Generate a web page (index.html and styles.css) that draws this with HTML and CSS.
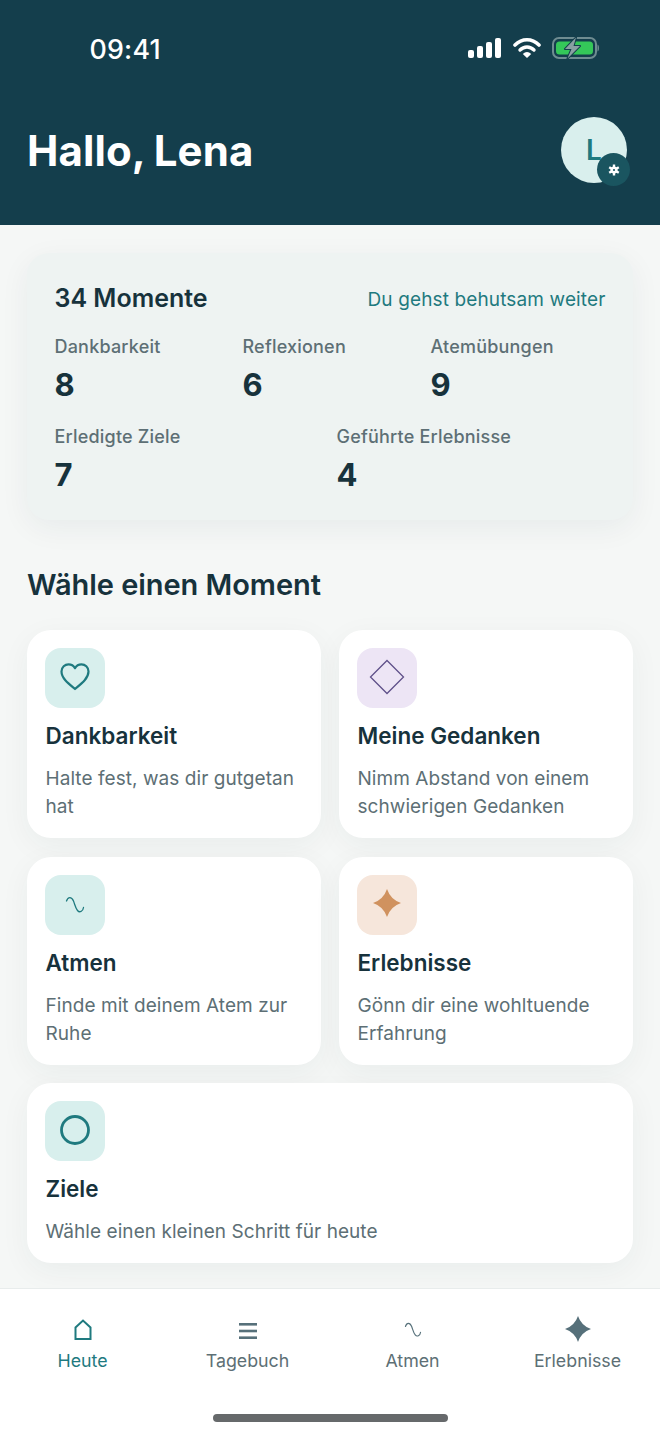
FILE: index.html
```html
<!DOCTYPE html>
<html lang="de">
<head>
<meta charset="utf-8">
<title>Hallo, Lena</title>
<link rel="stylesheet" href="styles.css">
</head>
<body>
<div class="screen">
  <header class="header">
    <div class="status">
      <span class="time">09:41</span>
      <div class="status-icons">
        <svg class="sig" width="33" height="20" viewBox="0 0 33 20"><rect x="0" y="12" width="6" height="8" rx="2" fill="#fff"/><rect x="9" y="8" width="6" height="12" rx="2" fill="#fff"/><rect x="18" y="4" width="6" height="16" rx="2" fill="#fff"/><rect x="27" y="0" width="6" height="20" rx="2" fill="#fff"/></svg>
        <svg class="wifi" width="28" height="21" viewBox="0 0 28 21"><path d="M2 8 C9 1 19 1 26 8" fill="none" stroke="#fff" stroke-width="3.600" stroke-linecap="round"/><path d="M7 13 C11 9 17 9 21 13" fill="none" stroke="#fff" stroke-width="3.400" stroke-linecap="round"/><path d="M9.800 17 C12.500 14.300 15.500 14.300 18.200 17 L14 21 Z" fill="#fff"/></svg>
        <svg class="batt" width="47" height="23" viewBox="0 0 47 23"><rect x="1" y="1" width="43" height="20" rx="6" fill="none" stroke="#6f8c91" stroke-width="2"/><rect x="4" y="4.500" width="37" height="13" rx="3.500" fill="#34c759"/><path d="M45.500 7.500 C47.500 8 47.500 14 45.500 14.500 Z" fill="#6f8c91"/><path d="M24 0.500 L13 12 H19.500 L15.500 21.500 L28 9 H21.500 Z" fill="#8a9fa3" stroke="#143e4c" stroke-width="2" stroke-linejoin="round" paint-order="stroke"/></svg>
      </div>
    </div>
    <div class="greeting">
      <h1 class="hello">Hallo, Lena</h1>
      <div class="avatar">
        <span class="avatar-letter">L</span>
        <span class="gear">
          <svg width="12" height="12" viewBox="0 0 12 12"><g stroke="#fff" stroke-width="2.400"><path d="M6 .5V11.500"/><path d="M1.200 3.200L10.800 8.800"/><path d="M1.200 8.800L10.800 3.200"/></g><circle cx="6" cy="6" r="3.600" fill="#fff"/><circle cx="6" cy="6" r="1.100" fill="#1a5560"/></svg>
        </span>
      </div>
    </div>
  </header>

  <main class="content">
    <section class="summary">
      <div class="summary-top">
        <h2 class="summary-title">34 Momente</h2>
        <span class="summary-note">Du gehst behutsam weiter</span>
      </div>
      <div class="stats stats-three">
        <div class="stat"><span class="stat-label">Dankbarkeit</span><span class="stat-value">8</span></div>
        <div class="stat"><span class="stat-label">Reflexionen</span><span class="stat-value">6</span></div>
        <div class="stat"><span class="stat-label">Atemübungen</span><span class="stat-value">9</span></div>
      </div>
      <div class="stats stats-two">
        <div class="stat"><span class="stat-label">Erledigte Ziele</span><span class="stat-value">7</span></div>
        <div class="stat"><span class="stat-label">Geführte Erlebnisse</span><span class="stat-value">4</span></div>
      </div>
    </section>

    <h2 class="section-title">Wähle einen Moment</h2>

    <div class="cards">
      <article class="card">
        <div class="tile tile-teal">
          <svg class="lift" width="32" height="32" viewBox="0 0 32 32"><path d="M16 28 C10 23 2.500 17.500 2.500 10.500 C2.500 6 6 3.300 9.500 3.300 C12.300 3.300 14.700 4.800 16 7.200 C17.300 4.800 19.700 3.300 22.500 3.300 C26 3.300 29.500 6 29.500 10.500 C29.500 17.500 22 23 16 28 Z" fill="none" stroke="#1f7a7f" stroke-width="2.200" stroke-linejoin="round"/></svg>
        </div>
        <h3 class="card-title">Dankbarkeit</h3>
        <p class="card-text">Halte fest, was dir gutgetan hat</p>
      </article>
      <article class="card">
        <div class="tile tile-lilac">
          <svg class="lift" width="36" height="36" viewBox="0 0 36 36"><path d="M18 1.500 L34.500 18 L18 34.500 L1.500 18 Z" fill="none" stroke="#5f5089" stroke-width="1.300"/></svg>
        </div>
        <h3 class="card-title">Meine Gedanken</h3>
        <p class="card-text">Nimm Abstand von einem schwierigen Gedanken</p>
      </article>
      <article class="card">
        <div class="tile tile-teal">
          <svg width="20" height="18" viewBox="0 0 20 18"><path d="M1.500 5 C3 .5 6.500 .5 8.500 5 C10 9 10.500 12 12.500 14.500 C14.500 17 18 15.500 18.500 11.500" fill="none" stroke="#1f7a7f" stroke-width="1.300" stroke-linecap="round"/></svg>
        </div>
        <h3 class="card-title">Atmen</h3>
        <p class="card-text">Finde mit deinem Atem zur Ruhe</p>
      </article>
      <article class="card">
        <div class="tile tile-peach">
          <svg class="lift-more" width="28" height="28" viewBox="0 0 28 28"><path d="M14 0 Q17.500 10.500 28 14 Q17.500 17.500 14 28 Q10.500 17.500 0 14 Q10.500 10.500 14 0 Z" fill="#d0925f"/></svg>
        </div>
        <h3 class="card-title">Erlebnisse</h3>
        <p class="card-text">Gönn dir eine wohltuende Erfahrung</p>
      </article>
      <article class="card card-wide">
        <div class="tile tile-teal">
          <svg class="lift" width="30" height="30" viewBox="0 0 30 30"><circle cx="15" cy="15" r="13.500" fill="none" stroke="#1f7a7f" stroke-width="2.800"/></svg>
        </div>
        <h3 class="card-title">Ziele</h3>
        <p class="card-text">Wähle einen kleinen Schritt für heute</p>
      </article>
    </div>
  </main>

  <nav class="tabbar">
    <div class="tabs">
      <div class="tab tab-active">
        <span class="tab-icon"><svg class="tab-home" width="18" height="22" viewBox="0 0 18 22"><path d="M1.500 20 V8.500 L9 1.500 L16.500 8.500 V20 Z" fill="none" stroke="#1f7a7f" stroke-width="2"/></svg></span>
        <span class="tab-label">Heute</span>
      </div>
      <div class="tab">
        <span class="tab-icon"><svg width="18" height="18" viewBox="0 0 18 18"><g fill="#56707a"><rect x="0" y="1" width="18" height="2.600"/><rect x="0" y="7.700" width="18" height="2.600"/><rect x="0" y="14.400" width="18" height="2.600"/></g></svg></span>
        <span class="tab-label">Tagebuch</span>
      </div>
      <div class="tab">
        <span class="tab-icon"><svg class="tab-wave" width="18" height="16" viewBox="0 0 20 18"><path d="M1.500 5 C3 .5 6.500 .5 8.500 5 C10 9 10.500 12 12.500 14.500 C14.500 17 18 15.500 18.500 11.500" fill="none" stroke="#56707a" stroke-width="1.300" stroke-linecap="round"/></svg></span>
        <span class="tab-label">Atmen</span>
      </div>
      <div class="tab">
        <span class="tab-icon"><svg class="tab-star" width="26" height="26" viewBox="0 0 28 28"><path d="M14 0 Q17.500 10.500 28 14 Q17.500 17.500 14 28 Q10.500 17.500 0 14 Q10.500 10.500 14 0 Z" fill="#56707a"/></svg></span>
        <span class="tab-label">Erlebnisse</span>
      </div>
    </div>
    <div class="home-indicator"></div>
  </nav>
</div>
</body>
</html>
```
FILE: styles.css
```css
* { box-sizing: border-box; margin: 0; padding: 0; }
html, body { width: 660px; height: 1434px; overflow: hidden; }
body { font-family: Inter, "Liberation Sans", sans-serif; background: #f5f7f6; color: #17323c; }
.screen { width: 660px; height: 1434px; display: flex; flex-direction: column; }

.header { height: 225px; background: #143e4c; color: #fff; padding: 0 27px; flex: none; }
.status { height: 98px; display: flex; justify-content: space-between; align-items: flex-start; padding-top: 32px; }
.time { margin-left: 62.500px; font-size: 26.800px; line-height: 34px; font-weight: 500; letter-spacing: 0.2px; }
.status-icons { display: flex; align-items: flex-start; margin-right: 34px; padding-top: 5px; }
.sig { margin-top: 1px; }
.wifi { margin-left: 12px; }
.batt { margin-left: 11px; }

.greeting { display: flex; justify-content: space-between; align-items: flex-start; padding-top: 19px; }
.hello { font-size: 42px; line-height: 68px; font-weight: 700; word-spacing: -1px; letter-spacing: 0.1px; }
.avatar { position: relative; width: 66px; height: 66px; border-radius: 50%; background: #d9efed; display: flex; align-items: center; justify-content: center; margin-right: 6px; }
.avatar-letter { font-size: 28px; font-weight: 600; color: #1f7a7f; }
.gear { position: absolute; right: -3px; bottom: -3px; width: 33px; height: 33px; border-radius: 50%; background: #1a5560; display: flex; align-items: center; justify-content: center; }

.content { flex: 1; padding: 28px 27px 0; }
.summary { height: 267px; background: #eef3f2; border-radius: 22px; padding: 28px 27.500px 0; box-shadow: 0 8px 30px rgba(23, 50, 60, 0.06); }
.summary-top { display: flex; justify-content: space-between; align-items: center; height: 34px; }
.summary-title { font-size: 25px; line-height: 34px; font-weight: 600; color: #17323c; }
.summary-note { font-size: 19px; line-height: 24px; letter-spacing: 0.13px; color: #1f7a7f; margin-top: 4px; }
.stats { display: grid; margin-top: 20px; }
.stats-three { grid-template-columns: repeat(3, 188px); }
.stats-two { grid-template-columns: repeat(2, 282px); margin-top: 20px; }
.stat { display: flex; flex-direction: column; }
.stat-label { font-size: 18px; line-height: 24px; letter-spacing: 0.2px; font-weight: 500; color: #5d6f75; }
.stat-value { font-size: 31px; line-height: 40px; font-weight: 700; color: #17323c; margin-top: 6px; }

.section-title { font-size: 29px; line-height: 38px; font-weight: 600; letter-spacing: -0.05px; color: #17323c; margin-top: 46px; }

.cards { display: grid; grid-template-columns: 294px 294px; grid-template-rows: 208px 208px 180px; gap: 18.500px 18px; margin-top: 26px; }
.card { background: #fff; border-radius: 24px; padding: 18px 18.500px; box-shadow: 0 8px 30px rgba(23, 50, 60, 0.05); }
.card-wide { grid-column: 1 / 3; }
.tile { width: 60px; height: 60px; border-radius: 16px; display: flex; align-items: center; justify-content: center; margin-left: -0.500px; }
.tile-teal { background: #d8efed; }
.tile-lilac { background: #ede5f5; }
.tile-peach { background: #f6e6db; }
.lift { margin-top: -2px; }
.lift-more { margin-top: -3px; }
.card-title { font-size: 22.500px; line-height: 30px; font-weight: 600; color: #17323c; margin-top: 13px; }
.card-text { font-size: 19px; line-height: 28px; letter-spacing: 0.06px; color: #5d6f75; margin-top: 14px; }

.tabbar { height: 146px; flex: none; background: #fff; border-top: 1px solid #e8ecec; position: relative; }
.tabs { display: grid; grid-template-columns: repeat(4, 165px); padding-top: 27px; }
.tab { display: flex; flex-direction: column; align-items: center; color: #5d6f75; }
.tab-icon { height: 30px; display: flex; align-items: center; justify-content: center; }
.tab-home { margin-top: -2px; }
.tab-wave { margin-top: -2px; }
.tab-star { margin-top: -4px; }
.tab-label { font-size: 17.800px; line-height: 24px; margin-top: 3px; }
.tab-active { color: #1f7a7f; }
.home-indicator { position: absolute; left: 213px; bottom: 12px; width: 235px; height: 8px; border-radius: 4px; background: #66696b; }
```
